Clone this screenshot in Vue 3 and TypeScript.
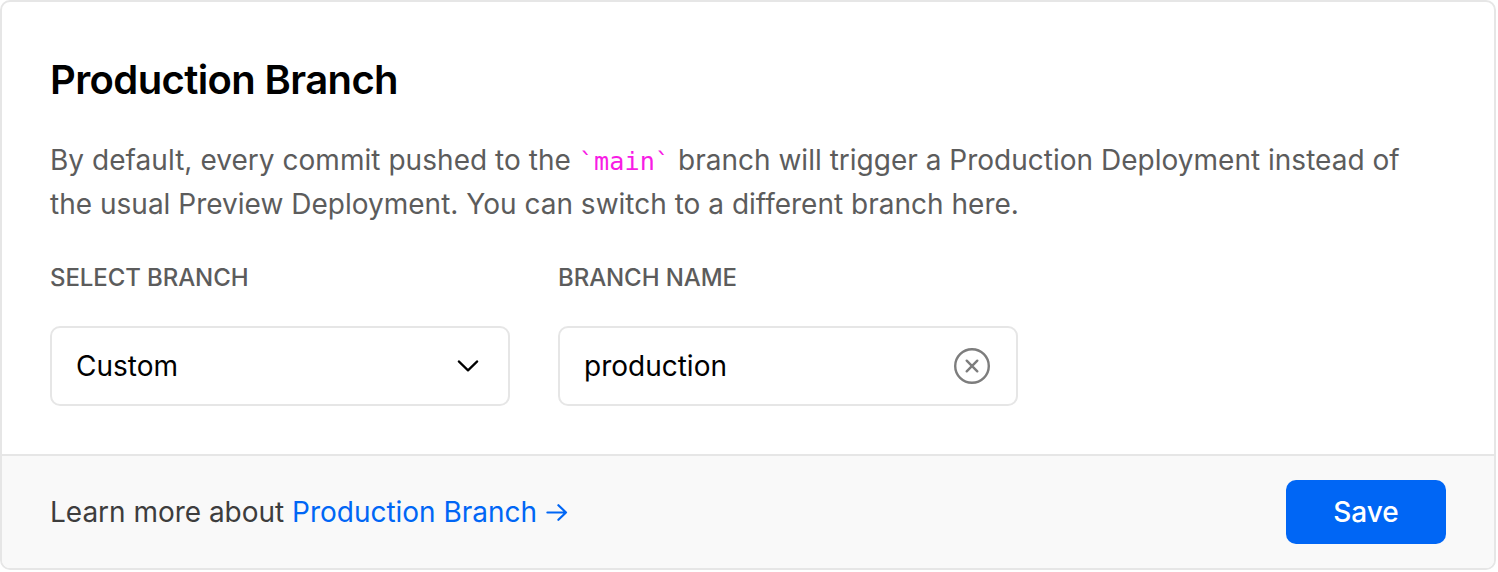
<script setup lang="ts">
import { ref } from 'vue'

const branchMode = ref<string>('Custom')
const branchName = ref<string>('production')
</script>

<template>
  <section class="card">
    <div class="content">
      <h1 class="title">Production Branch</h1>
      <p class="description">
        By default, every commit pushed to the <code class="code">`main`</code> <span class="rest">branch will trigger a Production Deployment instead of<br />the usual Preview Deployment. You can switch to a different branch here.</span>
      </p>
      <div class="fields">
        <div class="field">
          <span class="label">SELECT BRANCH</span>
          <button class="control" type="button">
            <span class="value">{{ branchMode }}</span>
            <svg class="chevron" width="24" height="16" viewBox="0 0 24 16" fill="none" stroke="#000" stroke-width="2.2" stroke-linecap="round" stroke-linejoin="round">
              <path d="M2.8 3.4l9.2 9 9.2-9" />
            </svg>
          </button>
        </div>
        <div class="field">
          <span class="label">BRANCH NAME</span>
          <div class="control">
            <span class="value">{{ branchName }}</span>
            <svg class="clear" width="36" height="36" viewBox="0 0 36 36" fill="none" stroke="#7d7d7d" stroke-width="2.4" stroke-linecap="round">
              <circle cx="18" cy="18" r="16.8" />
              <path d="M12.7 12.7l10.6 10.6M23.3 12.7L12.7 23.3" />
            </svg>
          </div>
        </div>
      </div>
    </div>
    <footer class="footer">
      <p class="learn">
        Learn more about <a class="link">Production Branch<svg class="arrow" width="22" height="18" viewBox="0 0 22 18" fill="none" stroke="#0066f5" stroke-width="2.2" stroke-linecap="round" stroke-linejoin="round"><path d="M1.4 8.5h18.6M12.4 1.2L20 8.5l-7.6 7.3" /></svg></a>
      </p>
      <button class="save" type="button">Save</button>
    </footer>
  </section>
</template>

<style>
body {
  background: #fff;
}
</style>

<style scoped>
.card {
  box-sizing: border-box;
  width: 1496px;
  height: 570px;
  display: flex;
  flex-direction: column;
  border: 2px solid #e6e6e6;
  border-radius: 10px;
  overflow: hidden;
  background: #fff;
  font-family: Inter, "Liberation Sans", sans-serif;
  font-size: 28px;
}
.content {
  box-sizing: border-box;
  height: 452px;
  padding: 48px 48px 0;
}
.title {
  margin: 0;
  font-size: 40px;
  line-height: 60px;
  font-weight: 600;
  letter-spacing: -0.62px;
  color: #000;
}
.description {
  margin: 28px 0 0;
  line-height: 44px;
  letter-spacing: 0.04px;
  color: #5c5c5c;
  white-space: nowrap;
}
.rest {
  letter-spacing: 0.01px;
}
.code {
  font-family: "DejaVu Sans Mono", monospace;
  font-size: 25.2px;
  line-height: 1;
  color: #f81ce5;
}
.fields {
  display: flex;
  gap: 48px;
  margin-top: 34px;
}
.field {
  display: flex;
  flex-direction: column;
  gap: 30px;
}
.label {
  font-size: 24px;
  line-height: 36px;
  font-weight: 500;
  letter-spacing: -0.09px;
  color: #5c5c5c;
}
.control {
  box-sizing: border-box;
  width: 460px;
  height: 80px;
  display: flex;
  align-items: center;
  justify-content: space-between;
  padding: 0 26px 0 24px;
  border: 2px solid #e6e6e6;
  border-radius: 10px;
  background: #fff;
  font: inherit;
  color: #000;
}
.chevron {
  margin-right: 2px;
}
.footer {
  box-sizing: border-box;
  height: 114px;
  display: flex;
  align-items: center;
  justify-content: space-between;
  padding: 0 48px;
  border-top: 2px solid #e6e6e6;
  background: #f9f9f9;
}
.learn {
  margin: 0;
  letter-spacing: -0.02px;
  color: #3d3d3d;
}
.link {
  color: #0066f5;
}
.arrow {
  margin-left: 9px;
}
.save {
  width: 160px;
  height: 64px;
  padding: 0;
  border: 0;
  border-radius: 10px;
  background: #0066f5;
  color: #fff;
  font: inherit;
  font-weight: 500;
}
</style>
